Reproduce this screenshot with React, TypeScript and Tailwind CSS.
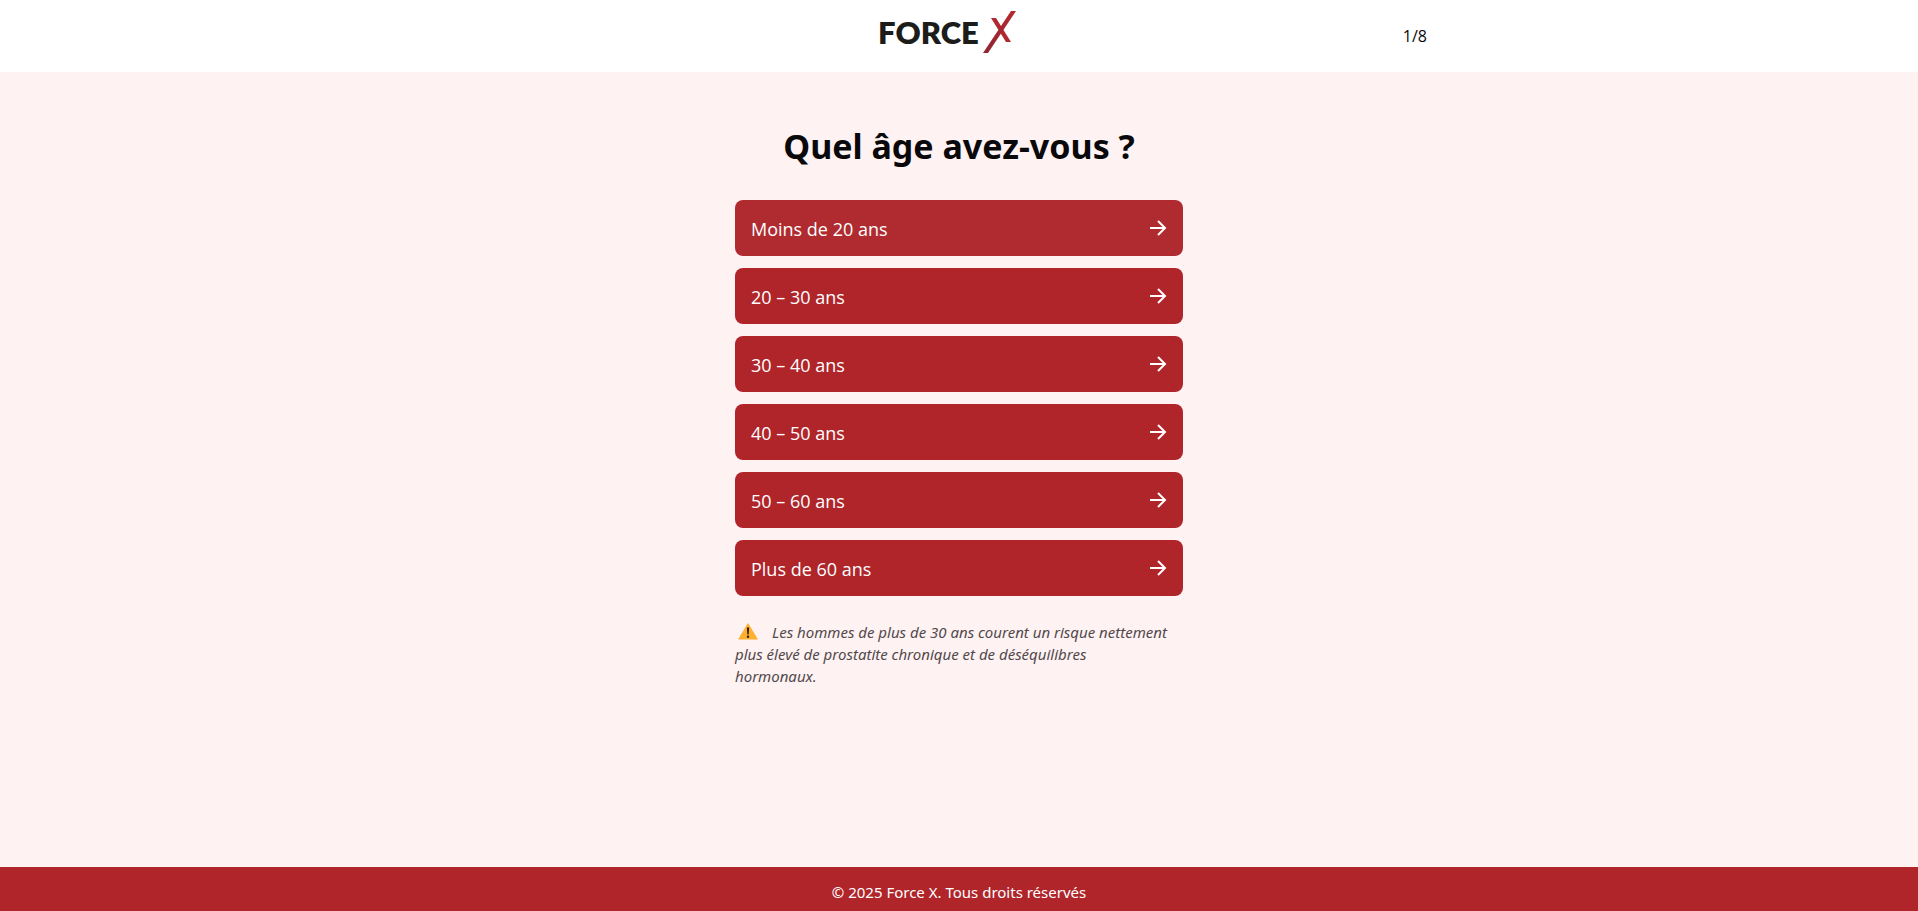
import { useState } from 'react';

const ages = [
  'Moins de 20 ans',
  '20 – 30 ans',
  '30 – 40 ans',
  '40 – 50 ans',
  '50 – 60 ans',
  'Plus de 60 ans',
];

const Logo = () => (
  <div className="flex items-center gap-1">
    <span className="font-['Lato',sans-serif] text-[31px] leading-none font-extrabold text-[#1c1c1a]">FORCE</span>
    <svg width="33" height="44" viewBox="0 0 33 44" aria-hidden="true">
      <defs>
        <linearGradient id="slash" x1="1" y1="0" x2="0" y2="1">
          <stop offset="0" stopColor="#b9282f" />
          <stop offset="1" stopColor="#8c2733" />
        </linearGradient>
      </defs>
      <path d="M8 8h5l15 24h-5z" fill="#ad2a30" />
      <path d="M28 1h5L5 43H0z" fill="url(#slash)" />
    </svg>
  </div>
);

const ArrowIcon = () => (
  <svg width="18" height="16" viewBox="0 0 18 16" fill="none" stroke="currentColor" strokeWidth="2" aria-hidden="true">
    <path d="M1 8h15M9 1l7 7-7 7" />
  </svg>
);

const WarningIcon = () => (
  <svg width="20" height="17" viewBox="0 0 20 17" className="ml-[3px] mr-[14px] inline-block align-[-2px]" role="img" aria-label="Attention">
    <path d="M10 1 19 16H1z" fill="#ffb02e" stroke="#ffb02e" strokeWidth="1.2" strokeLinejoin="round" />
    <path d="M8.9 4.5h2.2l-.4 7H9.3z" fill="#2b1a10" />
    <circle cx="10" cy="13.7" r="1.2" fill="#2b1a10" />
  </svg>
);

const App = () => {
  const [selected, setSelected] = useState('');

  return (
    <div className="flex min-h-screen flex-col bg-[#fef2f2] font-['Noto_Sans',sans-serif] text-[#09090b]">
      {/* Header */}
      <header className="h-[72px] bg-white px-4">
        <div className="mx-auto flex max-w-[936px] items-start justify-between pt-[10px]">
          <div />
          <Logo />
          <span className="pt-[14px] font-['Open_Sans',sans-serif] text-base leading-6">1/8</span>
        </div>
      </header>

      {/* Question */}
      <main className="flex flex-1 justify-center px-4 pt-12">
        <div className="w-full max-w-md">
          <h1 className="mb-7 text-center text-[34px] leading-[52px] font-bold whitespace-nowrap">Quel âge avez-vous ?</h1>
          <div className="flex flex-col gap-3">
            {ages.map((age) => (
              <button
                key={age}
                type="button"
                aria-pressed={selected === age}
                onClick={() => setSelected(age)}
                className="flex h-14 items-center justify-between rounded-lg bg-[#af252a] px-4 text-left font-['Open_Sans',sans-serif] text-lg text-white first:bg-[#b02b30]"
              >
                <span className="pt-[2px]">{age}</span>
                <ArrowIcon />
              </button>
            ))}
          </div>
          <p className="mt-[25px] pr-[14px] text-[15px] leading-[22px] text-[#52494c] italic">
            <WarningIcon />
            Les hommes de plus de 30 ans courent un risque nettement plus élevé de prostatite chronique et de
            déséquilibres hormonaux.
          </p>
        </div>
      </main>

      {/* Footer */}
      <footer className="bg-[#af252a] pt-[13px] pb-[7px] text-center text-[15px] leading-6 text-white">
        © 2025 Force X. Tous droits réservés
      </footer>
    </div>
  );
};

export default App;
